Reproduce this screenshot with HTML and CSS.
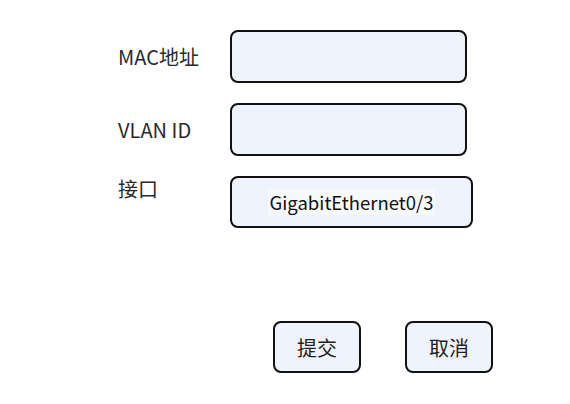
FILE: index.html
```html
<!DOCTYPE html>
<html lang="zh-CN">
<head>
    <meta charset="UTF-8">
    <title>MAC地址绑定</title>
    <link rel="stylesheet" href="styles.css">
</head>
<body>
    <div class="page">
        <div class="form">
            <div class="row">
                <span class="label">MAC地址</span>
                <div class="field"></div>
            </div>
            <div class="row">
                <span class="label">VLAN ID</span>
                <div class="field"></div>
            </div>
            <div class="row row-top">
                <span class="label">接口</span>
                <div class="field field-wide">
                    <span class="value">GigabitEthernet0/3</span>
                </div>
            </div>
        </div>
        <div class="actions">
            <button class="btn">提交</button>
            <button class="btn btn-cancel">取消</button>
        </div>
    </div>
</body>
</html>
```

FILE: styles.css
```css
body {
    margin: 0;
    padding: 0;
    background: #fff;
    font-family: "Noto Sans CJK SC", "Noto Sans", sans-serif;
    color: #222;
}

.page {
    padding: 30px 0 0 118px;
}

.form {
    display: flex;
    flex-direction: column;
    gap: 20px;
}

.row {
    display: flex;
    align-items: center;
}

.row-top {
    align-items: flex-start;
}

.row-top .label {
    line-height: 24px;
    padding-top: 1px;
}

.label {
    width: 112px;
    font-size: 20px;
    color: #2a2a2a;
}

.field {
    box-sizing: border-box;
    width: 237px;
    height: 53px;
    border: 2.5px solid #111;
    border-radius: 8px;
    background: #eef3fd;
}

.field-wide {
    width: 243px;
    height: 52px;
    display: flex;
    align-items: center;
    justify-content: center;
}

.value {
    background: #f8f9fb;
    font-size: 18.5px;
    line-height: 26px;
    color: #111;
    padding: 0 2px;
}

.actions {
    display: flex;
    gap: 44px;
    margin: 93px 0 0 155px;
}

.btn {
    box-sizing: border-box;
    width: 88px;
    height: 52px;
    border: 2.5px solid #111;
    border-radius: 8px;
    background: #eef3fd;
    font-family: "Noto Sans CJK SC", sans-serif;
    font-size: 20px;
    color: #222;
    padding: 0;
}
```
